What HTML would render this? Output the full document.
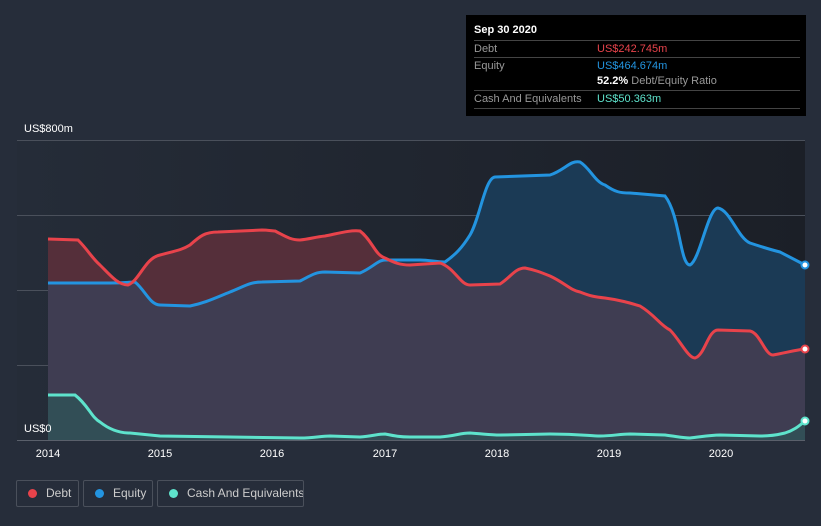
<!DOCTYPE html>
<html><head><meta charset="utf-8"><style>
body{margin:0;background:#262d3a;width:821px;height:526px;overflow:hidden;font-family:"Liberation Sans",sans-serif;}
.tt{position:absolute;left:466px;top:15px;width:340px;height:101px;background:#000;color:#fff;font-size:11px;}
.row{position:absolute;left:8px;width:326px;border-top:1px solid #444;height:17px;line-height:17px;}
.l{color:#999;position:absolute;left:0}
.v{position:absolute;left:123px}
.leg{position:absolute;top:480px;height:27px;border:1px solid #4a505b;border-radius:2px;color:#ccc;font-size:12px;line-height:25px;box-sizing:border-box;white-space:nowrap;overflow:hidden;}
.dot{display:inline-block;width:9px;height:9px;border-radius:50%;margin:0 9px 0 11px;vertical-align:-1px}
</style></head><body>
<svg width="821" height="526" style="position:absolute;left:0;top:0">
<defs>
<linearGradient id="bg" x1="0" x2="1" y1="0" y2="0"><stop offset="0" stop-color="#252c38"/><stop offset="1" stop-color="#1b1f27"/></linearGradient>
<clipPath id="eq"><path d="M48,283 L110,283 C125,283 130,282 135,282 C145,290 150,305 160,305 L190,306 C205,303 215,298 230,292 C245,286 250,282 262,282 L300,281 C310,276 315,272 325,272 L360,273 C372,268 378,260 385,260 L420,260 C430,260 435,262 445,262 C455,255 462,248 470,235 C480,218 485,178 495,177 L550,175 C565,170 570,160 580,162 C590,168 595,182 605,185 C615,192 620,193 630,193 L665,196 C680,215 680,265 690,265 C700,260 708,208 718,208 C730,210 738,238 750,243 C765,248 772,250 780,252 L805,265 L805,440 L48,440Z"/></clipPath>
</defs>
<rect x="17" y="140" width="788" height="300" fill="url(#bg)"/>
<g stroke="#4a505b" stroke-width="1"><line x1="17" y1="140.5" x2="805" y2="140.5"/><line x1="17" y1="215.5" x2="805" y2="215.5"/><line x1="17" y1="290.5" x2="805" y2="290.5"/><line x1="17" y1="365.5" x2="805" y2="365.5"/></g>
<path id="debt" d="M48,239 L78,240 C88,250 92,258 100,265 C110,275 118,285 128,285 C140,280 145,258 160,255 C175,251 182,250 190,245 C200,236 205,232 218,232 L262,230 C268,230 272,231 275,231 C285,236 290,240 300,240 C310,239 315,237 325,236 C340,233 350,230 360,231 C372,240 375,255 385,258 C395,263 400,265 410,265 L440,263 C455,268 460,285 470,285 L500,284 C510,278 515,268 525,268 C535,270 540,272 550,276 C565,283 570,290 580,292 C590,296 595,297 605,298 C620,300 630,303 640,306 C655,315 660,325 670,330 C680,340 688,358 695,358 C705,355 708,330 718,330 L750,331 C760,333 765,355 773,355 C785,353 795,350 805,349" fill="none"/>
<path d="M48,239 L78,240 C88,250 92,258 100,265 C110,275 118,285 128,285 C140,280 145,258 160,255 C175,251 182,250 190,245 C200,236 205,232 218,232 L262,230 C268,230 272,231 275,231 C285,236 290,240 300,240 C310,239 315,237 325,236 C340,233 350,230 360,231 C372,240 375,255 385,258 C395,263 400,265 410,265 L440,263 C455,268 460,285 470,285 L500,284 C510,278 515,268 525,268 C535,270 540,272 550,276 C565,283 570,290 580,292 C590,296 595,297 605,298 C620,300 630,303 640,306 C655,315 660,325 670,330 C680,340 688,358 695,358 C705,355 708,330 718,330 L750,331 C760,333 765,355 773,355 C785,353 795,350 805,349 L805,440 L48,440Z" fill="#552f3a"/>
<path d="M48,283 L110,283 C125,283 130,282 135,282 C145,290 150,305 160,305 L190,306 C205,303 215,298 230,292 C245,286 250,282 262,282 L300,281 C310,276 315,272 325,272 L360,273 C372,268 378,260 385,260 L420,260 C430,260 435,262 445,262 C455,255 462,248 470,235 C480,218 485,178 495,177 L550,175 C565,170 570,160 580,162 C590,168 595,182 605,185 C615,192 620,193 630,193 L665,196 C680,215 680,265 690,265 C700,260 708,208 718,208 C730,210 738,238 750,243 C765,248 772,250 780,252 L805,265 L805,440 L48,440Z" fill="#1b3a55"/>
<path clip-path="url(#eq)" d="M48,239 L78,240 C88,250 92,258 100,265 C110,275 118,285 128,285 C140,280 145,258 160,255 C175,251 182,250 190,245 C200,236 205,232 218,232 L262,230 C268,230 272,231 275,231 C285,236 290,240 300,240 C310,239 315,237 325,236 C340,233 350,230 360,231 C372,240 375,255 385,258 C395,263 400,265 410,265 L440,263 C455,268 460,285 470,285 L500,284 C510,278 515,268 525,268 C535,270 540,272 550,276 C565,283 570,290 580,292 C590,296 595,297 605,298 C620,300 630,303 640,306 C655,315 660,325 670,330 C680,340 688,358 695,358 C705,355 708,330 718,330 L750,331 C760,333 765,355 773,355 C785,353 795,350 805,349 L805,440 L48,440Z" fill="#3f3d52"/>
<path d="M48,395 L75,395 C88,405 92,418 100,422 C110,430 120,433 130,433 L160,436 L230,437 L300,438 C315,438 320,436 330,436 L360,437 C372,436 378,434 385,434 C395,436 400,437 410,437 L440,437 C455,436 460,433 470,433 C485,434 490,435 500,435 L550,434 C580,434 590,436 600,436 C612,436 620,434 630,434 L665,435 C680,437 684,438 690,438 C700,437 710,435 720,435 L760,436 C775,436 780,434 785,433 C795,430 800,425 805,421 L805,440 L48,440Z" fill="#2f5258" opacity="0.8"/>
<path d="M48,283 L110,283 C125,283 130,282 135,282 C145,290 150,305 160,305 L190,306 C205,303 215,298 230,292 C245,286 250,282 262,282 L300,281 C310,276 315,272 325,272 L360,273 C372,268 378,260 385,260 L420,260 C430,260 435,262 445,262 C455,255 462,248 470,235 C480,218 485,178 495,177 L550,175 C565,170 570,160 580,162 C590,168 595,182 605,185 C615,192 620,193 630,193 L665,196 C680,215 680,265 690,265 C700,260 708,208 718,208 C730,210 738,238 750,243 C765,248 772,250 780,252 L805,265" fill="none" stroke="#2394e0" stroke-width="3"/>
<use href="#debt" stroke="#e8434b" stroke-width="3"/>
<path d="M48,395 L75,395 C88,405 92,418 100,422 C110,430 120,433 130,433 L160,436 L230,437 L300,438 C315,438 320,436 330,436 L360,437 C372,436 378,434 385,434 C395,436 400,437 410,437 L440,437 C455,436 460,433 470,433 C485,434 490,435 500,435 L550,434 C580,434 590,436 600,436 C612,436 620,434 630,434 L665,435 C680,437 684,438 690,438 C700,437 710,435 720,435 L760,436 C775,436 780,434 785,433 C795,430 800,425 805,421" fill="none" stroke="#5ee3cc" stroke-width="3"/>
<line x1="17" y1="440.5" x2="805" y2="440.5" stroke="#5a606b"/>
<circle cx="805" cy="265" r="3.5" fill="#fff" stroke="#2394e0" stroke-width="2"/>
<circle cx="805" cy="349" r="3.5" fill="#fff" stroke="#e8434b" stroke-width="2"/>
<circle cx="805" cy="421" r="3.5" fill="#fff" stroke="#5ee3cc" stroke-width="2"/>
<g fill="#fff" font-size="11" font-family="Liberation Sans"><text x="24" y="132">US$800m</text><text x="24" y="432">US$0</text>
<g text-anchor="middle"><text x="48" y="457">2014</text><text x="160" y="457">2015</text><text x="272" y="457">2016</text><text x="385" y="457">2017</text><text x="497" y="457">2018</text><text x="609" y="457">2019</text><text x="721" y="457">2020</text></g></g>
</svg>
<div class="tt">
<div style="position:absolute;left:8px;top:9px;font-weight:bold;">Sep 30 2020</div>
<div class="row" style="top:25px"><span class="l">Debt</span><span class="v" style="color:#e8434b">US$242.745m</span></div>
<div class="row" style="top:42px"><span class="l">Equity</span><span class="v" style="color:#2394e0">US$464.674m</span></div>
<div style="position:absolute;left:131px;top:60px"><b>52.2%</b> <span style="color:#999">Debt/Equity Ratio</span></div>
<div class="row" style="top:75px;border-bottom:1px solid #444"><span class="l">Cash And Equivalents</span><span class="v" style="color:#5ee3cc">US$50.363m</span></div>
</div>
<div class="leg" style="left:16px;width:63px"><span class="dot" style="background:#e8434b"></span>Debt</div>
<div class="leg" style="left:83px;width:70px"><span class="dot" style="background:#2394e0"></span>Equity</div>
<div class="leg" style="left:157px;width:147px"><span class="dot" style="background:#5ee3cc"></span>Cash And Equivalents</div>
</body></html>
